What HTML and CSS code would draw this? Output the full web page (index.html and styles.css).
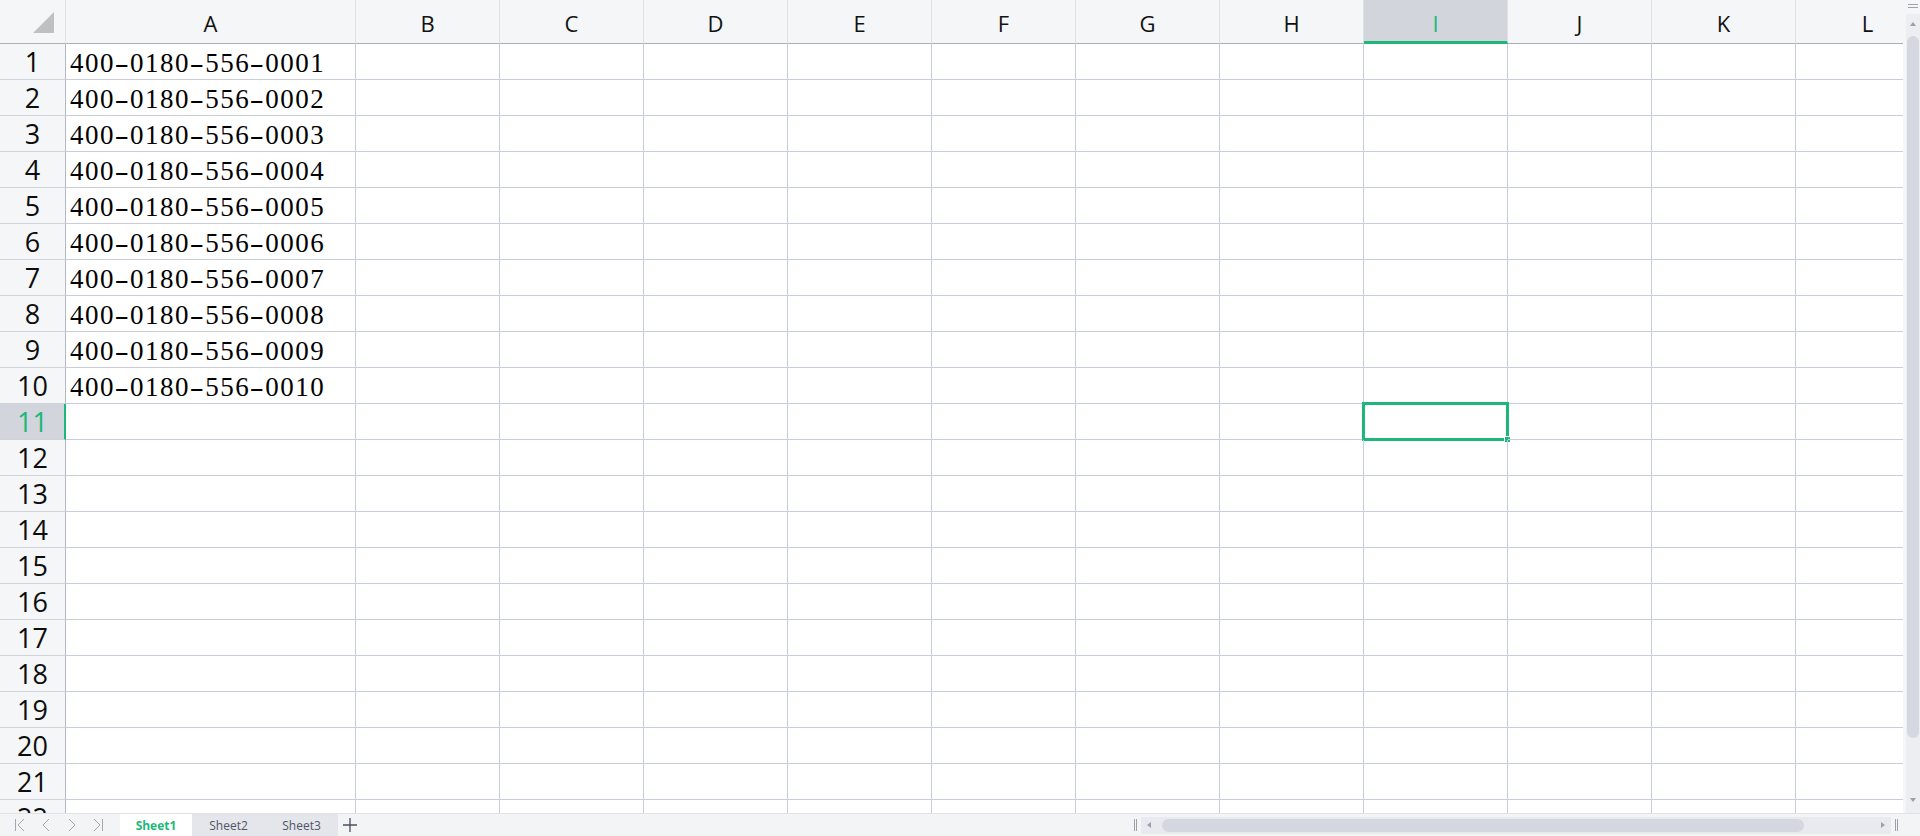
FILE: index.html
```html
<!DOCTYPE html>
<html lang="en">
<head>
    <meta charset="UTF-8">
    <title>Sheet1</title>
    <link rel="stylesheet" href="styles.css">
</head>
<body>
    <div class="app">
        <div class="main">
            <div class="sheet" id="sheet"></div>
            <div class="vscroll">
                <div class="grip"><span></span><span></span></div>
                <div class="vtrack">
                    <div class="arrow up"></div>
                    <div class="vthumb"></div>
                    <div class="vspace"></div>
                    <div class="arrow down"></div>
                </div>
            </div>
        </div>
        <div class="bottombar">
            <div class="nav">
                <svg width="119" height="22" viewBox="0 0 119 22">
                    <g fill="none" stroke="#a3a8b3" stroke-width="1">
                        <path d="M15.5 5v12M24 5l-6 6 6 6"/>
                        <path d="M49 5l-6 6 6 6"/>
                        <path d="M69 5l6 6-6 6"/>
                        <path d="M94 5l6 6-6 6M102.5 5v12"/>
                    </g>
                </svg>
            </div>
            <div class="tab active">Sheet1</div>
            <div class="tab">Sheet2</div>
            <div class="tab">Sheet3</div>
            <div class="add">
                <svg width="16" height="16" viewBox="0 0 16 16">
                    <path d="M8 1v14M1 8h14" stroke="#4a5060" stroke-width="1.3"/>
                </svg>
            </div>
            <div class="spacer"></div>
            <div class="hscroll">
                <div class="hgrip"></div>
                <div class="htrack">
                    <div class="harrow left"></div>
                    <div class="hthumb"></div>
                    <div class="hspace"></div>
                    <div class="harrow right"></div>
                </div>
                <div class="hgrip"></div>
            </div>
        </div>
    </div>
    <script>
        const cols = "ABCDEFGHIJKL".split("");
        const sheet = document.getElementById("sheet");
        const selCol = "I";
        const selRow = 11;

        function addCell(cls, html) {
            let div = document.createElement("div");
            div.className = cls;
            if (html) div.innerHTML = html;
            sheet.appendChild(div);
            return div;
        }

        // header row
        addCell("corner", '<svg width="22" height="22" viewBox="0 0 22 22"><path d="M0 21H21V0Z" fill="#bfc0c2"/></svg>');
        cols.forEach(c => {
            addCell("colhead" + (c === selCol ? " sel" : ""), c);
        });

        // body rows
        for (let r = 1; r <= 22; r++) {
            addCell("rowhead" + (r === selRow ? " sel" : ""), r);
            cols.forEach(c => {
                let html = "";
                if (c === "A" && r <= 10) {
                    let value = "400-0180-556-" + String(r).padStart(4, "0");
                    html = value.split("-").join('<span class="dash">-</span>');
                }
                let cell = addCell("cell", html);
                if (c === selCol && r === selRow) {
                    cell.innerHTML = '<div class="selbox"><div class="handle"></div></div>';
                }
            });
        }
    </script>
</body>
</html>
```

FILE: styles.css
```css
body {
    margin: 0;
    overflow: hidden;
    font-family: "Open Sans", "Noto Sans", sans-serif;
    background: #fff;
}
.app {
    display: flex;
    flex-direction: column;
    width: 1920px;
    height: 836px;
}
.main {
    display: flex;
    height: 813px;
}
.sheet {
    flex: 1;
    min-width: 0;
    overflow: hidden;
    display: grid;
    grid-template-columns: 66px 290px repeat(11, 144px);
    grid-template-rows: 44px;
    grid-auto-rows: 36px;
}
.sheet > div {
    box-sizing: border-box;
    border-right: 1px solid #c9cdd9;
    border-bottom: 1px solid #c9cdd9;
}
.corner {
    background: #f5f6f8;
    display: flex;
    align-items: flex-start;
    justify-content: flex-end;
    padding: 12px 10px 0 0;
}
.sheet > .corner,
.sheet > .colhead {
    border-bottom: 1px solid #abb0bf;
    border-right: 1px solid #e0e2e8;
}
.colhead {
    background: #f5f6f8;
    display: flex;
    align-items: center;
    justify-content: center;
    padding-top: 3px;
    font-size: 22px;
    color: #111;
}
.sheet > .colhead.sel {
    background: #d2d5dc;
    border-bottom: 3px solid #1db879;
    color: #1db879;
    padding-top: 5px;
}
.rowhead {
    background: #f5f6f8;
    display: flex;
    align-items: center;
    justify-content: center;
    font-size: 27px;
    color: #0d0d0d;
}
.sheet > .rowhead {
    border-right: 1px solid #b3b7c6;
    border-bottom: 1px solid #d0d3dc;
}
.sheet > .rowhead.sel {
    background: #d2d5dc;
    border-right: 2px solid #1db879;
    color: #1db879;
    padding-left: 1px;
}
.cell {
    position: relative;
    display: flex;
    align-items: flex-end;
    padding-left: 4px;
    font-family: "Liberation Serif", serif;
    font-size: 27px;
    letter-spacing: 1.5px;
    color: #000;
    white-space: nowrap;
}
.dash {
    display: inline-block;
    width: 13.6px;
    text-align: center;
    transform: scaleX(1.6);
    letter-spacing: 0;
    margin-right: 1.5px;
}
.selbox {
    position: absolute;
    left: -2px;
    top: -2px;
    right: -2px;
    bottom: -2px;
    border: 3px solid #1db879;
}
.handle {
    position: absolute;
    right: -5px;
    bottom: -5px;
    width: 5px;
    height: 5px;
    background: #1db879;
    border: 1px solid #fff;
}
.vscroll {
    width: 17px;
    background: #f5f6f8;
    display: flex;
    flex-direction: column;
    align-items: flex-end;
}
.grip {
    height: 14px;
    width: 14px;
    display: flex;
    flex-direction: column;
    align-items: center;
    padding-top: 4px;
    box-sizing: border-box;
    gap: 2px;
}
.grip span {
    display: block;
    width: 10px;
    height: 1px;
    background: #9ea3b0;
}
.vtrack {
    flex: 1;
    width: 14px;
    background: #eceef2;
    display: flex;
    flex-direction: column;
    align-items: center;
}
.arrow {
    height: 19px;
    width: 14px;
    display: flex;
    align-items: center;
    justify-content: center;
}
.arrow::before {
    content: "";
    border-left: 3px solid transparent;
    border-right: 3px solid transparent;
}
.arrow.up::before {
    border-bottom: 4px solid #9aa0ae;
}
.arrow.down::before {
    border-top: 4px solid #9aa0ae;
}
.arrow.down {
    margin-bottom: 4px;
}
.vthumb {
    margin-top: 3px;
    width: 12px;
    height: 702px;
    border-radius: 6px;
    background: #d5d8e0;
}
.vspace {
    flex: 1;
}
.bottombar {
    height: 23px;
    box-sizing: border-box;
    border-top: 1px solid #e0e2e8;
    background: #f3f4f6;
    display: flex;
    align-items: stretch;
    font-size: 12px;
}
.nav {
    width: 120px;
    display: flex;
    align-items: center;
}
.tab {
    width: 73px;
    display: flex;
    align-items: center;
    justify-content: center;
    background: #e4e6eb;
    color: #4f5568;
}
.tab.active {
    width: 72px;
    background: #fff;
    color: #1db879;
    font-weight: bold;
}
.add {
    width: 24px;
    display: flex;
    align-items: center;
    justify-content: center;
}
.spacer {
    flex: 1;
}
.hscroll {
    display: flex;
    align-items: center;
    padding-right: 22px;
    gap: 4px;
}
.hgrip {
    width: 3px;
    height: 12px;
    border-left: 1px solid #9aa0ae;
    border-right: 1px solid #9aa0ae;
    box-sizing: border-box;
}
.htrack {
    width: 750px;
    height: 17px;
    background: #e8eaef;
    display: flex;
    align-items: center;
}
.harrow {
    width: 16px;
    display: flex;
    justify-content: center;
}
.harrow::before {
    content: "";
    border-top: 3px solid transparent;
    border-bottom: 3px solid transparent;
}
.harrow.left::before {
    border-right: 4px solid #9aa0ae;
}
.harrow.right::before {
    border-left: 4px solid #9aa0ae;
}
.hthumb {
    margin-left: 5px;
    width: 642px;
    height: 13px;
    border-radius: 7px;
    background: #d4d7df;
}
.hspace {
    flex: 1;
}
```
